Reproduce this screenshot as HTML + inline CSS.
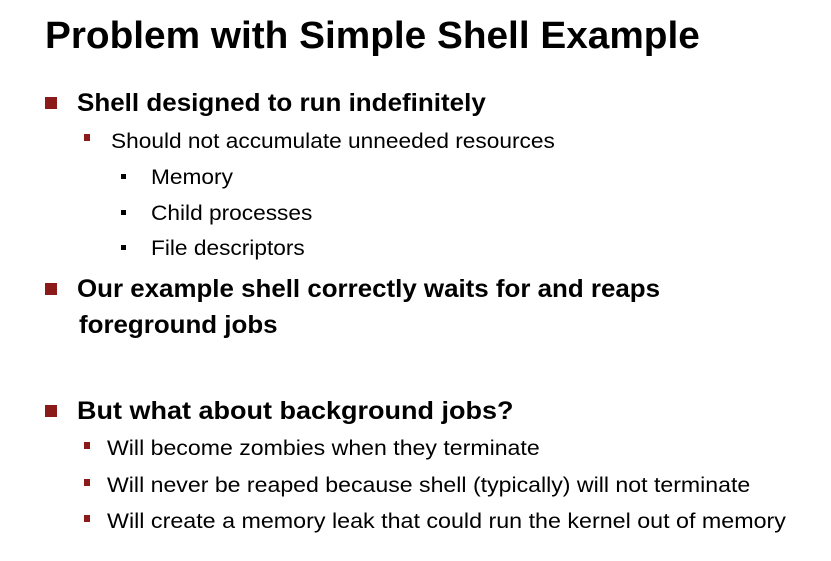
<!DOCTYPE html>
<html><head><meta charset="utf-8"><style>
body{margin:0;width:831px;height:561px;background:#fff;overflow:hidden;position:relative;font-family:"Liberation Sans",sans-serif;color:#000}
.t{position:absolute;white-space:nowrap;transform-origin:0 50%;line-height:1}
.b{font-weight:bold}
.sq{position:absolute;background:#8b1a1a}
.bk{position:absolute;background:#000}
</style></head><body>
<div class="t b" style="left:45px;top:17px;font-size:38px;transform:scaleX(1.02)">Problem with Simple Shell Example</div>

<div class="sq" style="left:45px;top:97px;width:12px;height:12px"></div>
<div class="t b" style="left:77px;top:91px;font-size:25px;transform:scaleX(1.04)">Shell designed to run indefinitely</div>

<div class="sq" style="left:84px;top:134px;width:6px;height:7px"></div>
<div class="t" style="left:111px;top:131px;font-size:21px;transform:scaleX(1.08)">Should not accumulate unneeded resources</div>

<div class="bk" style="left:121px;top:174px;width:5px;height:5px"></div>
<div class="t" style="left:151px;top:167px;font-size:21px;transform:scaleX(1.08)">Memory</div>
<div class="bk" style="left:121px;top:210px;width:5px;height:5px"></div>
<div class="t" style="left:151px;top:203px;font-size:21px;transform:scaleX(1.08)">Child processes</div>
<div class="bk" style="left:121px;top:245px;width:5px;height:5px"></div>
<div class="t" style="left:151px;top:238px;font-size:21px;transform:scaleX(1.08)">File descriptors</div>

<div class="sq" style="left:45px;top:283px;width:12px;height:12px"></div>
<div class="t b" style="left:77px;top:277px;font-size:25px;transform:scaleX(1.036)">Our example shell correctly waits for and reaps</div>
<div class="t b" style="left:79px;top:313px;font-size:25px;transform:scaleX(1.036)">foreground jobs</div>

<div class="sq" style="left:45px;top:405px;width:12px;height:12px"></div>
<div class="t b" style="left:77px;top:399px;font-size:25px;transform:scaleX(1.08)">But what about background jobs?</div>

<div class="sq" style="left:84px;top:442px;width:6px;height:7px"></div>
<div class="t" style="left:107px;top:438px;font-size:21px;transform:scaleX(1.1)">Will become zombies when they terminate</div>
<div class="sq" style="left:84px;top:479px;width:6px;height:7px"></div>
<div class="t" style="left:107px;top:475px;font-size:21px;transform:scaleX(1.1)">Will never be reaped because shell (typically) will not terminate</div>
<div class="sq" style="left:84px;top:515px;width:6px;height:7px"></div>
<div class="t" style="left:107px;top:511px;font-size:21px;transform:scaleX(1.108)">Will create a memory leak that could run the kernel out of memory</div>
</body></html>
